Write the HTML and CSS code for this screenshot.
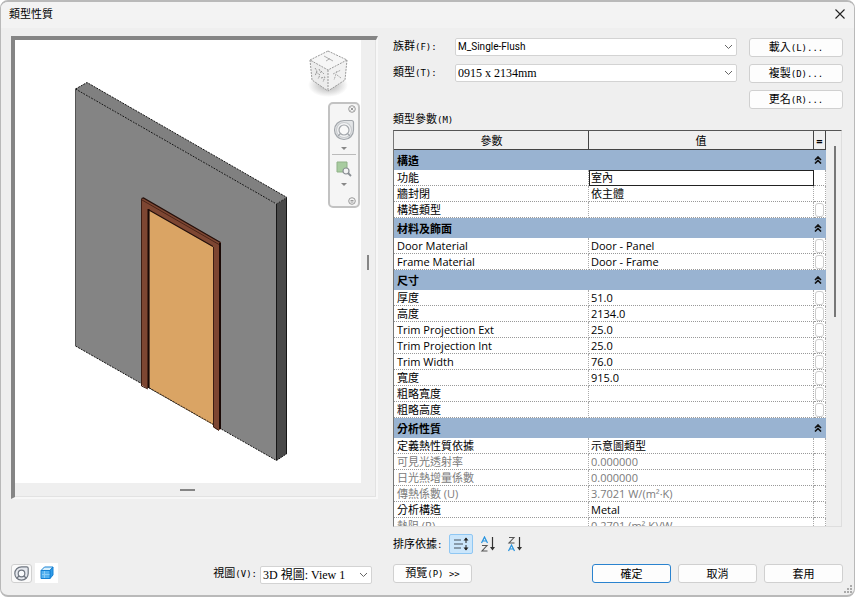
FILE: index.html
```html
<!DOCTYPE html>
<html lang="zh-Hant">
<head>
<meta charset="utf-8">
<meta name="viewport" content="width=device-width, initial-scale=1">
<title>類型性質</title>
<link rel="stylesheet" href="styles.css">
</head>
<body>
<main class="dialog">
  <header class="titlebar">
    <h1>類型性質</h1>
    <button class="close" aria-label="關閉"><svg width="12" height="12" viewBox="0 0 12 12"><path d="M1.5 1.5l9 9M10.500 1.500l-9 9" fill="none" stroke="#222" stroke-width="1.100"/></svg></button>
  </header>
  <div class="content">
    <section class="left">
      <div class="frame">
        <div class="view">
          <svg class="model" viewBox="15 40 346 443" aria-hidden="true">
            <polygon points="75.500,89 87,82.500 287,197.500 276.500,204" fill="#808080"/>
            <polygon points="75.500,89 276.500,204 276.500,460.500 75.500,346" fill="#848484"/>
            <polygon points="276.500,204 287,197.500 287,453.500 276.500,460.500" fill="#494949"/>
            <path d="M75.500 89L87 82.500L287 197.500M75.500 89L276.500 204L287 197.500M75.500 346L276.500 460.500L287 453.500" fill="none" stroke="#151515" stroke-width="1" stroke-dasharray="2 1"/>
            <path d="M75.500 89V346" stroke="#555" fill="none"/>
            <path d="M276.500 204V460M286.500 198V454" stroke="#161616" fill="none"/>
            <polygon points="141.500,198.500 143.500,198 221,242.500 221,429 218.500,430.500 213,427 213,247 149.500,210.500 149.500,387 147,388.500 141.500,385" fill="#7d4632"/>
            <polygon points="149.500,210.500 213.500,247 213.500,425 149.500,388" fill="#daa464"/>
            <path d="M141.500 198.500L143.500 198L220.500 242.500M149 210L213 246.500" fill="none" stroke="#24100b" stroke-width="1.200"/>
            <path d="M142 200L219 244.500" fill="none" stroke="#4a2519" stroke-width="1"/>
            <path d="M148.500 209V388M220 243V429" fill="none" stroke="#190805" stroke-width="2"/>
            <path d="M141.500 199V386L148 389M213.500 247V427L219 430.500" fill="none" stroke="#3b1c12"/>
            <path d="M149.500 388L213.500 424.500" fill="none" stroke="#2b2118" stroke-dasharray="2 1"/>
          </svg>
          <svg class="cube" width="44" height="50" viewBox="0 0 44 50" role="img" aria-label="視圖方塊">
            <defs><radialGradient id="shade"><stop offset="0" stop-color="#888" stop-opacity=".7"/><stop offset="1" stop-color="#888" stop-opacity="0"/></radialGradient></defs>
            <ellipse cx="22" cy="37" rx="20" ry="12" fill="url(#shade)"/>
            <path d="M22 3L41 12L22 22L4 12Z" fill="#f6f6f6"/><path d="M4 12L22 22V43L6 32Z" fill="#ececec"/><path d="M41 12L22 22V43L39 32Z" fill="#f1f1f1"/>
            <path d="M22 3L41 12L22 22L4 12ZM4 12L6 32L22 43L39 32L41 12M22 22V43" fill="none" stroke="#999" stroke-dasharray="2 1"/>
            <path d="M18 8L27 13M24 10.500L20 13" stroke="#b0b0b0" fill="none"/>
            <path d="M9 20L11 23L9 28M10 24L14 27L12 31M15 23L18 26M15 30L19 29L17 34M13 21L15 25" stroke="#999" stroke-dasharray="2 1" fill="none"/>
            <path d="M27 26L35 22M31 23L28 32M31 27L35 30" stroke="#aaa" stroke-dasharray="2 1" fill="none"/>
          </svg>
          <div class="navbar">
            <button class="mini" aria-label="關閉導覽列"><svg width="8" height="8" viewBox="0 0 8 8" fill="none" stroke="#999"><circle cx="4" cy="4" r="3.300"/><path d="M2.500 2.500l3 3M5.500 2.500l-3 3"/></svg></button>
            <button class="tool wheel" aria-label="導覽輪"><svg width="22" height="22" viewBox="0 0 22 22" fill="#e3e5e7" stroke="#a2a6ab" stroke-width="1.200"><path d="M11 1.500H18.500Q20.500 1.500 20.500 3.500V11A9.500 9.500 0 1 1 11 1.500Z"/><circle cx="11" cy="11" r="7.500" fill="#f3f4f5" stroke="#c8cbce"/><circle cx="11" cy="11" r="5" fill="#f8f8f8"/><path d="M7.500 14.500L5 17M14.500 14.500L17 17"/></svg></button>
            <span class="arrow"></span>
            <hr>
            <button class="tool" aria-label="縮放區域"><svg width="16" height="16" viewBox="0 0 16 16"><path d="M1 1h10v10H1z" fill="#a8cca0" stroke="#8fb187"/><circle cx="10" cy="10" r="3" fill="#f4f4f4" stroke="#8a8f94" stroke-width="1.200"/><path d="M12 12l3 3" stroke="#8a8f94" stroke-width="1.800"/></svg></button>
            <span class="arrow"></span>
            <button class="mini last" aria-label="導覽列選項"><svg width="8" height="8" viewBox="0 0 8 8" fill="none" stroke="#999"><circle cx="4" cy="4" r="3.300"/><path d="M2.500 3.500h3M2.500 5h3"/></svg></button>
          </div>
        </div>
        <span class="grip upright"></span>
        <span class="grip flat"></span>
      </div>
      <div class="left-foot">
        <button class="steer" aria-label="導覽輪"><svg width="15" height="15" viewBox="0 0 15 15" fill="#e5e8ee" stroke="#6f7680" stroke-width="1.200"><path d="M7.500 .8H12.700Q14.200 .8 14.200 2.300V7.500A6.700 6.700 0 1 1 7.500 .8Z"/><circle cx="7.500" cy="7.500" r="3.300" fill="#f8fafc"/><path d="M5 10L3 12M10 10l2 2"/></svg></button>
        <button class="box" aria-label="3D 視圖"><svg width="14" height="14" viewBox="0 0 14 14" stroke="#1681d3"><path d="M1 4.500L4.500 1H13L10 4.500Z" fill="#d8effc"/><path d="M10 4.500L13 1V9L10 12.500Z" fill="#2f9be8"/><path d="M1 4.500h9v8H1z" fill="#56b2f0"/><path d="M2 8.500h7.500M4.500 5v7" stroke="#8accf6" fill="none"/></svg></button>
        <label for="view">視圖<span class="key">(V):</span></label>
        <select id="view"><option>3D 視圖: View 1</option></select>
      </div>
    </section>
    <section class="right">
      <div class="pickers">
        <label for="family">族群<span class="key">(F):</span></label>
        <select id="family" class="ui"><option>M_Single-Flush</option></select>
        <button class="btn">載入<span class="key">(L)...</span></button>
        <label for="type">類型<span class="key">(T):</span></label>
        <select id="type"><option>0915 x 2134mm</option></select>
        <button class="btn">複製<span class="key">(D)...</span></button>
        <button class="btn rename">更名<span class="key">(R)...</span></button>
      </div>
      <h2 id="params">類型參數<span class="key">(M)</span></h2>
      <div class="table-box">
        <table aria-labelledby="params">
          <colgroup><col class="c-name"><col><col class="c-eq"></colgroup>
          <thead><tr><th>參數</th><th>值</th><th class="eq">=</th></tr></thead>
          <tbody>
            <tr class="group"><th colspan="2">構造</th><td><svg class="chev" viewBox="0 0 8 8"><path d="M1 4l3-3l3 3M1 7.500l3-3l3 3"/></svg></td></tr>
            <tr><td>功能</td><td class="active">室內</td><td></td></tr>
            <tr><td>牆封閉</td><td>依主體</td><td></td></tr>
            <tr><td>構造類型</td><td></td><td><button class="assoc" aria-label="關聯參數"></button></td></tr>
            <tr class="group"><th colspan="2">材料及飾面</th><td><svg class="chev" viewBox="0 0 8 8"><path d="M1 4l3-3l3 3M1 7.500l3-3l3 3"/></svg></td></tr>
            <tr><td>Door Material</td><td>Door - Panel</td><td><button class="assoc" aria-label="關聯參數"></button></td></tr>
            <tr><td>Frame Material</td><td>Door - Frame</td><td><button class="assoc" aria-label="關聯參數"></button></td></tr>
            <tr class="group"><th colspan="2">尺寸</th><td><svg class="chev" viewBox="0 0 8 8"><path d="M1 4l3-3l3 3M1 7.500l3-3l3 3"/></svg></td></tr>
            <tr><td>厚度</td><td>51.0</td><td><button class="assoc" aria-label="關聯參數"></button></td></tr>
            <tr><td>高度</td><td>2134.0</td><td><button class="assoc" aria-label="關聯參數"></button></td></tr>
            <tr><td>Trim Projection Ext</td><td>25.0</td><td><button class="assoc" aria-label="關聯參數"></button></td></tr>
            <tr><td>Trim Projection Int</td><td>25.0</td><td><button class="assoc" aria-label="關聯參數"></button></td></tr>
            <tr><td>Trim Width</td><td>76.0</td><td><button class="assoc" aria-label="關聯參數"></button></td></tr>
            <tr><td>寬度</td><td>915.0</td><td><button class="assoc" aria-label="關聯參數"></button></td></tr>
            <tr><td>粗略寬度</td><td></td><td><button class="assoc" aria-label="關聯參數"></button></td></tr>
            <tr><td>粗略高度</td><td></td><td><button class="assoc" aria-label="關聯參數"></button></td></tr>
            <tr class="group"><th colspan="2">分析性質</th><td><svg class="chev" viewBox="0 0 8 8"><path d="M1 4l3-3l3 3M1 7.500l3-3l3 3"/></svg></td></tr>
            <tr><td>定義熱性質依據</td><td>示意圖類型</td><td></td></tr>
            <tr class="dim"><td>可見光透射率</td><td>0.000000</td><td></td></tr>
            <tr class="dim"><td>日光熱增量係數</td><td>0.000000</td><td></td></tr>
            <tr class="dim"><td>傳熱係數 (U)</td><td>3.7021 W/(m²·K)</td><td></td></tr>
            <tr><td>分析構造</td><td>Metal</td><td></td></tr>
            <tr class="dim"><td>熱阻 (R)</td><td>0.2701 (m²·K)/W</td><td></td></tr>
          </tbody>
        </table>
        <div class="scroll"><span class="thumb"></span></div>
      </div>
      <div class="sort">
        <span class="sort-label">排序依據<span class="key">:</span></span>
        <button class="sort-btn on" aria-label="預設順序"><svg width="16" height="16" viewBox="0 0 16 16"><path d="M1 4h7M1 8h9M1 12h7" stroke="#46515a" fill="none"/><path d="M13 2v5M13 9v5" stroke="#222" fill="none"/><path d="M10.500 4.500L13 1.500L15.500 4.500ZM10.500 11.500L13 14.500L15.500 11.500Z" fill="#222"/></svg></button>
        <button class="sort-btn" aria-label="遞增"><svg width="16" height="16" viewBox="0 0 16 16" fill="none"><path d="M1.500 7L4.500 1L7.500 7M2.500 5h4" stroke="#2492df" stroke-width="1.200"/><path d="M2 9.500h5L2 15h5.500" stroke="#555" stroke-width="1.100"/><path d="M12.500 1v11" stroke="#333" stroke-width="1.200"/><path d="M10 11L12.500 14.500L15 11Z" fill="#333"/></svg></button>
        <button class="sort-btn" aria-label="遞減"><svg width="16" height="16" viewBox="0 0 16 16" fill="none"><path d="M2 1.500h5L2 7h5.500" stroke="#555" stroke-width="1.100"/><path d="M1.500 15L4.500 9L7.500 15M2.500 13h4" stroke="#2492df" stroke-width="1.200"/><path d="M12.500 1v11" stroke="#333" stroke-width="1.200"/><path d="M10 11L12.500 14.500L15 11Z" fill="#333"/></svg></button>
      </div>
      <div class="actions">
        <button class="btn preview">預覽<span class="key">(P) &gt;&gt;</span></button>
        <button class="btn primary">確定</button>
        <button class="btn">取消</button>
        <button class="btn">套用</button>
      </div>
    </section>
  </div>
  <svg class="resize" width="9" height="9" viewBox="0 0 9 9" fill="#aaa" aria-hidden="true"><path d="M6 0h2v2H6zM3 3h2v2H3zM6 3h2v2H6zM0 6h2v2H0zM3 6h2v2H3zM6 6h2v2H6z"/></svg>
</main>
</body>
</html>
```
FILE: styles.css
```css
* { box-sizing: border-box; }
body {
  margin: 0;
  background: #fff;
  color: #000;
  font: 11px/16px "Open Sans", "Noto Sans CJK TC", sans-serif;
}
button, select { font: inherit; color: inherit; }
button { padding: 0; border: 0; background: none; }
svg { display: block; }

.dialog {
  position: relative;
  display: flex;
  flex-direction: column;
  height: 100vh;
  min-height: 480px;
  border: 1px solid #b9b9b9;
  border-top-width: 2px;
  border-bottom-width: 2px;
  border-radius: 8px;
  background: #efefef;
  overflow: hidden;
}
.titlebar {
  display: flex;
  align-items: center;
  justify-content: space-between;
  height: 26px;
  padding: 0 8px 2px;
  background: #f3f3f3;
}
h1, h2 { margin: 0; font-size: 11px; font-weight: 400; }
.content {
  flex: 1;
  min-height: 0;
  display: grid;
  grid-template-columns: minmax(0, 367fr) minmax(0, 450fr);
  column-gap: 15px;
  padding: 8px 11px 12px 10px;
}
.left, .right { display: flex; flex-direction: column; min-height: 0; }

.frame {
  position: relative;
  flex: 1;
  min-height: 0;
  margin-bottom: 64px;
  padding: 0 15px 14px 0;
  border: solid #858585;
  border-width: 4px 2px 2px 4px;
  border-right-color: #f7f7f7;
  border-bottom-color: #f7f7f7;
  box-shadow: inset -1px -1px #e2e2e2;
}
.view { position: relative; height: 100%; background: #fff; }
.model { width: 100%; height: 100%; }
.cube { position: absolute; top: 8px; right: 11px; }
.navbar {
  position: absolute;
  top: 62px;
  right: 1px;
  display: flex;
  flex-direction: column;
  align-items: center;
  width: 32px;
  height: 106px;
  padding: 1px 2px;
  border: 2px solid #c2c2c2;
  border-radius: 5px;
  background: #f5f5f5;
}
.mini { align-self: flex-end; }
.last { margin-top: auto; }
.wheel { margin-top: 6px; }
.arrow {
  margin: 6px 0 4px;
  border: 3px solid transparent;
  border-top-color: #888;
  border-bottom: 0;
}
.navbar hr { width: 100%; margin: 0 0 6px; border: 0; border-top: 1px solid #bbb; }
.grip { position: absolute; background: #858585; }
.upright { right: 7px; top: 47%; width: 2px; height: 15px; }
.flat { left: 165px; bottom: 6px; width: 15px; height: 2px; }

.left-foot { display: flex; align-items: center; height: 20px; }
.steer, .box { display: grid; place-items: center; }
.steer {
  width: 21px;
  height: 19px;
  border: 1px solid #d0d0d0;
  border-radius: 3px;
  background: #fafafa;
}
.box { width: 23px; height: 20px; margin-left: 3px; background: #fff; }
.left-foot label { margin-left: auto; }
.left-foot select { width: 112px; margin: 4px 6px 0 3px; }

.key { font-family: "DejaVu Sans Mono", monospace; font-size: 9px; }
select {
  appearance: none;
  min-width: 0;
  height: 18px;
  padding: 0 16px 0 2px;
  border: 1px solid #d3d3d3;
  border-radius: 2px;
  background: #fff url("data:image/svg+xml,%3Csvg xmlns='http://www.w3.org/2000/svg' width='9' height='6'%3E%3Cpath d='M1 1l3.500 3.500L8 1' fill='none' stroke='%23666'/%3E%3C/svg%3E") no-repeat right 3px center;
  font-family: "Liberation Serif", "Noto Sans CJK TC", serif;
  font-size: 12px;
}
select.ui { font-family: Roboto, sans-serif; font-size: 10px; }
.btn {
  height: 19px;
  border: 1px solid #d0d0d0;
  border-radius: 3px;
  background: #fdfdfd;
  line-height: 16px;
}
.pickers {
  display: grid;
  grid-template-columns: 62px minmax(0, 1fr) 94px;
  grid-auto-rows: 19px;
  row-gap: 7px;
  margin-top: 2px;
}
.pickers select { margin-right: 12px; }
.rename { grid-column: 3; }
h2 { margin: 2px 0; }

.table-box {
  flex: 1;
  min-height: 0;
  display: flex;
  margin-right: 1px;
  border: 1px solid #dedede;
  border-top-color: #555;
  border-left-color: #777;
  overflow: hidden;
}
table { flex: 1; height: max-content; table-layout: fixed; border-collapse: separate; border-spacing: 0; background: #fff; }
.c-name { width: 195px; }
.c-eq { width: 12px; }
th, td {
  height: 16px;
  padding: 0 2px;
  border-right: 1px dotted #aaa;
  border-bottom: 1px dotted #999;
  line-height: 15px;
  font-weight: 400;
  text-align: left;
  white-space: nowrap;
}
th:first-child, td:first-child { padding-left: 3px; }
td:last-child { padding: 0; }
thead th {
  height: 19px;
  border-right: 1px solid #444;
  border-bottom: 1px solid #444;
  background: #efefef;
  text-align: center;
}
thead .eq { padding: 0; font-weight: 700; }
.group th, .group td { height: 20px; border: 0; background: #99b3d1; font-weight: 700; }
.chev { width: 8px; height: 8px; fill: none; stroke: #111; stroke-width: 1.600; }
.dim { color: #7b7b7b; }
.active { outline: 1px solid #222; outline-offset: -1px; }
.assoc {
  display: block;
  width: 9px;
  height: 14px;
  margin: 0 auto;
  border: 1px solid #ccc;
  border-radius: 3px;
  background: #fff;
}
.scroll { width: 15px; padding: 15px 6px 0 8px; }
.thumb { display: block; width: 2px; height: 45%; background: #777; }

.sort { display: flex; align-items: center; gap: 3px; height: 20px; margin-top: 7px; }
.sort-label { margin-right: 4px; }
.sort-btn { display: grid; place-items: center; width: 24px; height: 20px; }
.sort-btn.on { border: 1px solid #8fc7f3; border-radius: 2px; background: #cbe6fb; }
.actions { display: flex; gap: 7px; margin-top: 10px; }
.actions .btn { width: 79px; }
.actions .preview { margin-right: auto; }
.actions .primary { border-color: #2a83cf; }
.resize { position: absolute; right: 1px; bottom: 1px; }
```
